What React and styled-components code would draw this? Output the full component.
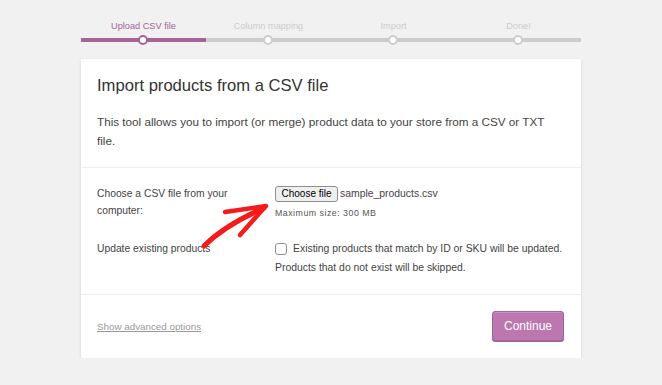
import React from "react";
import styled, { createGlobalStyle } from "styled-components";

const Global = createGlobalStyle`
  html, body { margin: 0; padding: 0; background: #f1f1f1; }
  body { font-family: "Liberation Sans", Arial, sans-serif; color: #555; }
`;

const Page = styled.div`
  width: 500px;
  margin: 0 auto;
  padding-top: 20px;
`;

const Steps = styled.ol`
  list-style: none;
  margin: 0;
  padding: 0;
  display: grid;
  grid-template-columns: repeat(4, 1fr);
`;

const Step = styled.li`
  position: relative;
  display: flex;
  flex-direction: column;
  align-items: center;
  font-size: 9.2px;
  line-height: 12px;
  color: ${(p) => (p.$active ? "#a46497" : "#ccc")};
  padding-bottom: 6px;
  border-bottom: 4px solid ${(p) => (p.$active ? "#a46497" : "#ccc")};
  &::after {
    content: "";
    position: absolute;
    left: 50%;
    bottom: -7px;
    width: 6px;
    height: 6px;
    margin-left: -6px;
    border-radius: 50%;
    background: #fff;
    border: 2px solid ${(p) => (p.$active ? "#a46497" : "#ccc")};
  }
`;

const Card = styled.div`
  margin-top: 17px;
  background: #fff;
  box-shadow: 0 1px 3px rgba(0, 0, 0, 0.13);
`;

const Section = styled.div`
  position: relative;
  padding: ${(p) => p.$pad || "16px"};
  border-top: ${(p) => (p.$first ? "none" : "1px solid #eee")};
`;

const Title = styled.h2`
  margin: 0;
  font-size: 16.6px;
  line-height: 20px;
  font-weight: 400;
  color: #333;
`;

const Desc = styled.p`
  margin: 16px 0 0;
  font-size: 11.7px;
  line-height: 19px;
  color: #444;
`;

const FormRow = styled.div`
  display: grid;
  grid-template-columns: 178px 1fr;
  margin-top: ${(p) => p.$gap || "0"};
`;

const Label = styled.div`
  font-size: 10.3px;
  line-height: 17px;
  color: #444;
  padding-right: 36px;
`;

const Field = styled.div`
  font-size: 10.4px;
  line-height: 17px;
  color: #444;
`;

const FileLine = styled.div`
  display: flex;
  align-items: center;
  gap: 2px;
`;

const FileButton = styled.button`
  font-family: "Liberation Sans", Arial, sans-serif;
  font-size: 10px;
  line-height: 12px;
  height: 16px;
  width: 63px;
  padding: 0;
  color: #000;
  background: #efefef;
  border: 1px solid #8f8f8f;
  border-radius: 3px;
`;

const Hint = styled.div`
  font-size: 8.8px;
  letter-spacing: 0.5px;
  line-height: 12px;
  color: #555;
  margin-top: 5px;
`;

const CheckLine = styled.label`
  display: flex;
  align-items: center;
  gap: 6px;
`;

const Box = styled.span`
  display: inline-block;
  width: 10px;
  height: 10px;
  border: 1px solid #8f8f8f;
  border-radius: 3px;
  background: #fff;
`;

const SubNote = styled.div`
  margin-top: 2px;
`;

const Footer = styled.div`
  display: flex;
  align-items: center;
  justify-content: space-between;
  padding: 16px 17px 17px 16px;
  border-top: 1px solid #eee;
`;

const Advanced = styled.a`
  font-size: 9.8px;
  color: #999;
  text-decoration: underline;
`;

const Continue = styled.button`
  font-family: "Liberation Sans", Arial, sans-serif;
  font-size: 12px;
  color: #fff;
  background: #bb77ae;
  border: 1px solid #a36597;
  border-radius: 3px;
  width: 72px;
  height: 30px;
  padding: 0;
  box-shadow: inset 0 1px 0 rgba(255, 255, 255, 0.2), 0 1px 0 #a36597;
`;

const Arrow = styled.svg`
  position: absolute;
  left: 110px;
  top: 21px;
  pointer-events: none;
`;

export default function App() {
  return (
    <>
      <Global />
      <Page>
        <Steps>
          <Step $active>Upload CSV file</Step>
          <Step>Column mapping</Step>
          <Step>Import</Step>
          <Step>Done!</Step>
        </Steps>
        <Card>
          <Section $first $pad="17px 16px 17px">
            <Title>Import products from a CSV file</Title>
            <Desc>
              This tool allows you to import (or merge) product data to your store from a CSV or TXT file.
            </Desc>
          </Section>
          <Section $pad="17px 16px 18px">
            <FormRow>
              <Label>Choose a CSV file from your computer:</Label>
              <Field>
                <FileLine>
                  <FileButton>Choose file</FileButton>
                  <span>sample_products.csv</span>
                </FileLine>
                <Hint>Maximum size: 300 MB</Hint>
              </Field>
            </FormRow>
            <FormRow $gap="21px">
              <Label>Update existing products</Label>
              <Field>
                <CheckLine>
                  <Box />
                  <span>Existing products that match by ID or SKU will be updated.</span>
                </CheckLine>
                <SubNote>Products that do not exist will be skipped.</SubNote>
              </Field>
            </FormRow>
            <Arrow width="90" height="70" viewBox="0 0 90 70">
              <g fill="none" stroke="#f51b1b" strokeLinecap="round" strokeLinejoin="round">
                <path d="M13 57 Q34 36 73 19" strokeWidth="5" />
                <path d="M34 23 L75 17" strokeWidth="4.5" />
                <path d="M49 46 L73 19" strokeWidth="4.5" />
              </g>
            </Arrow>
          </Section>
          <Footer>
            <Advanced href="#">Show advanced options</Advanced>
            <Continue>Continue</Continue>
          </Footer>
        </Card>
      </Page>
    </>
  );
}
